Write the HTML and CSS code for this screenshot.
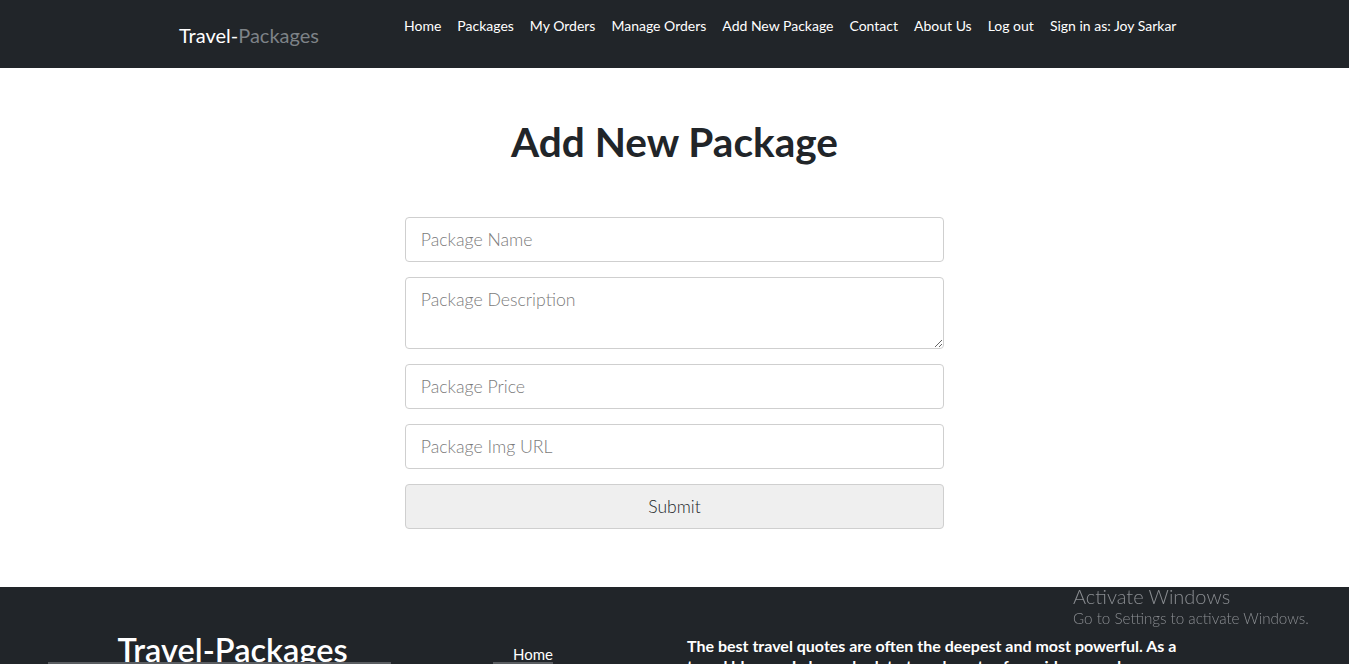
FILE: index.html
```html
<!DOCTYPE html>
<html lang="en">
<head>
<meta charset="utf-8">
<title>Travel-Packages</title>
<link rel="stylesheet" href="styles.css">
</head>
<body>
<header class="navbar">
  <a class="brand" href="#"><span class="brand-a">Travel-</span><span class="brand-b">Packages</span></a>
  <nav class="nav">
    <a href="#">Home</a>
    <a href="#">Packages</a>
    <a href="#">My Orders</a>
    <a href="#">Manage Orders</a>
    <a href="#">Add New Package</a>
    <a href="#">Contact</a>
    <a href="#">About Us</a>
    <a href="#">Log out</a>
    <a href="#">Sign in as: Joy Sarkar</a>
  </nav>
</header>

<main class="main">
  <h1 class="title">Add New Package</h1>
  <form class="form">
    <input class="field" type="text" placeholder="Package Name">
    <textarea class="field area" placeholder="Package Description"></textarea>
    <input class="field" type="text" placeholder="Package Price">
    <input class="field" type="text" placeholder="Package Img URL">
    <button class="submit" type="button">Submit</button>
  </form>
</main>

<footer class="footer">
  <div class="f-col f-brand">
    <h2>Travel-Packages</h2>
    <div class="f-bar"></div>
  </div>
  <div class="f-col f-links">
    <a href="#">Home</a>
    <div class="f-bar short"></div>
  </div>
  <div class="f-col f-text">
    <p>The best travel quotes are often the deepest and most powerful. As a travel blogger, I always look to travel quotes for guidance and photographs.</p>
  </div>
</footer>

<div class="activate">
  <div class="act-1">Activate Windows</div>
  <div class="act-2">Go to Settings to activate Windows.</div>
</div>
</body>
</html>
```

FILE: styles.css
```css
* { box-sizing: border-box; }
html, body { margin: 0; padding: 0; }
body {
  font-family: Lato, "Open Sans", "Liberation Sans", sans-serif;
  color: #212529;
  background: #fff;
  height: 664px;
  overflow: hidden;
}
a { text-decoration: none; }

.navbar {
  display: flex;
  align-items: flex-start;
  height: 68px;
  background: #212529;
  padding-left: 179px;
}
.brand {
  font-size: 20px;
  line-height: 24px;
  margin-top: 23px;
  width: 217px;
}
.brand-a { color: #fff; }
.brand-b { color: #7d8287; }
.nav {
  display: flex;
  margin-top: 16px;
}
.nav a {
  color: #fff;
  font-size: 14px;
  line-height: 20px;
  padding: 0 8px;
}

.main {
  padding-top: 50px;
  padding-bottom: 58px;
}
.title {
  margin: 0;
  text-align: center;
  font-size: 40.6px;
  line-height: 48px;
  font-weight: 700;
}
.form {
  width: 40%;
  margin: 51px auto 0;
  display: flex;
  flex-direction: column;
  gap: 15px;
}
.field {
  height: 45px;
  border: 1px solid #cfcfcf;
  border-radius: 4px;
  padding: 0 15px;
  font-family: inherit;
  font-size: 17.7px;
  color: #212529;
  background: #fff;
}
.field::placeholder { color: #7b7b7b; font-weight: 300; }
.area {
  height: 72px;
  padding-top: 11px;
  resize: vertical;
}
.submit {
  height: 45px;
  border: 1px solid #cfcfcf;
  border-radius: 4px;
  background: #efefef;
  font-family: inherit;
  font-size: 17.5px;
  color: #212529;
  font-weight: 300;
}

.footer {
  background: #212529;
  height: 77px;
  display: flex;
  align-items: flex-start;
  color: #fff;
}
.f-col { display: flex; flex-direction: column; }
.f-brand {
  width: 343px;
  margin-left: 48px;
  margin-top: 51px;
  align-items: center;
}
.f-brand h2 {
  margin: 0 0 0 26px;
  font-size: 32.5px;
  line-height: 24px;
  font-weight: 600;
}
.f-bar {
  width: 100%;
  height: 2px;
  background: #5a5d61;
}
.f-links {
  margin-left: 102px;
  margin-top: 60px;
  width: 140px;
}
.f-links a {
  color: #fff;
  font-size: 15px;
  line-height: 15px;
  padding-left: 20px;
}
.f-bar.short { width: 60px; height: 2px; }
.f-text {
  margin-left: 54px;
  margin-top: 49px;
  width: 515px;
}
.f-text p {
  margin: 0;
  font-size: 16px;
  font-weight: 700;
  line-height: 20px;
}

.activate {
  position: fixed;
  left: 1073px;
  top: 585px;
  color: #8a8d91;
}
.act-1 { font-size: 20px; line-height: 23px; font-weight: 300; }
.act-2 { font-size: 15.2px; line-height: 20px; font-weight: 300; }
```
